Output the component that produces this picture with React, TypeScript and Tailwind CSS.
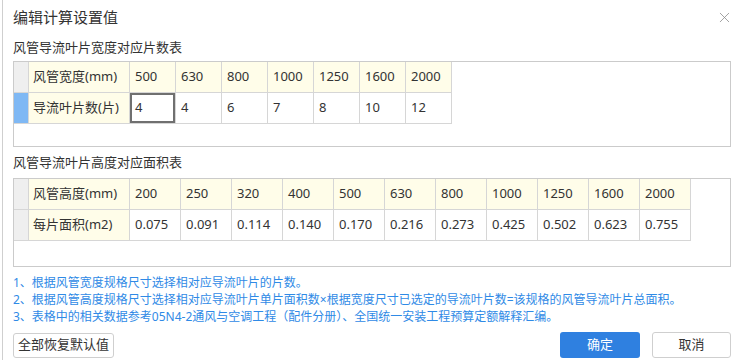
import { X } from 'lucide-react';

const font = { fontFamily: '"Noto Sans", "Noto Sans CJK SC", sans-serif' };

interface GridRow {
  label: string;
  values: string[];
  header?: boolean;
  active?: boolean;
}

interface GridProps {
  rows: GridRow[];
  colWidth: string;
  rowHeight: string;
  boxHeight: string;
  selected?: number;
}

const Grid = ({ rows, colWidth, rowHeight, boxHeight, selected }: GridProps) => {
  return (
    <div className={`border border-[#cbcbcb] bg-white ${boxHeight}`}>
      {rows.map((row, r) => (
        <div key={r} className={`flex ${rowHeight}`}>
          <div
            className={`w-[15px] shrink-0 border-r border-b border-[#d6d6d6] ${
              row.active ? 'bg-[#7fb8f4]' : 'bg-[#efefef]'
            }`}
          />
          <div className="flex w-[101px] shrink-0 items-center border-r border-b border-[#d6d6d6] bg-[#fffde9] pl-[4px] text-[13px] text-[#333]">
            {row.label}
          </div>
          {row.values.map((v, i) => (
            <div
              key={i}
              className={`flex shrink-0 items-center border-r border-b border-[#d6d6d6] pl-[5px] text-[13px] text-[#333] ${colWidth} ${
                row.header ? 'bg-[#fffde9]' : 'bg-white'
              } ${!row.header && selected === i ? 'shadow-[inset_0_0_0_2px_#707070]' : ''}`}
            >
              {v}
            </div>
          ))}
        </div>
      ))}
    </div>
  );
};

export default function App() {
  return (
    <div className="h-[360px] w-[734px] bg-white pl-[2px]" style={font}>
      <div className="flex h-full flex-col border-l border-[#cfcfcf] pl-[10px] pr-[3px]">
        <div className="flex h-[34px] shrink-0 items-center justify-between">
          <span className="text-[15px] text-[#333]">编辑计算设置值</span>
          <X className="-mr-[2px] mt-[1px] h-[17px] w-[17px] text-[#8a8a8a]" strokeWidth={1.1} />
        </div>
        <div className="flex h-[27px] items-center text-[13px] text-[#333]">风管导流叶片宽度对应片数表</div>
        <Grid
          colWidth="w-[46px]"
          rowHeight="h-[31px]"
          boxHeight="h-[86px]"
          selected={0}
          rows={[
            { label: '风管宽度(mm)', values: ['500', '630', '800', '1000', '1250', '1600', '2000'], header: true },
            { label: '导流叶片数(片)', values: ['4', '4', '6', '7', '8', '10', '12'], active: true },
          ]}
        />
        <div className="flex h-[31px] items-center pt-[1px] text-[13px] text-[#333]">风管导流叶片高度对应面积表</div>
        <Grid
          colWidth="w-[51px]"
          rowHeight="h-[31px]"
          boxHeight="h-[89px]"
          rows={[
            {
              label: '风管高度(mm)',
              values: ['200', '250', '320', '400', '500', '630', '800', '1000', '1250', '1600', '2000'],
              header: true,
            },
            {
              label: '每片面积(m2)',
              values: ['0.075', '0.091', '0.114', '0.140', '0.170', '0.216', '0.273', '0.425', '0.502', '0.623', '0.755'],
            },
          ]}
        />
        <div className="mt-[7px] flex flex-col text-[12px] leading-[17px] text-[#2f8ae6]">
          <span>1、根据风管宽度规格尺寸选择相对应导流叶片的片数。</span>
          <span>2、根据风管高度规格尺寸选择相对应导流叶片单片面积数×根据宽度尺寸已选定的导流叶片数=该规格的风管导流叶片总面积。</span>
          <span>3、表格中的相关数据参考05N4-2通风与空调工程（配件分册）、全国统一安装工程预算定额解释汇编。</span>
        </div>
        <div className="mt-[7px] flex items-center justify-between">
          <button className="h-[25px] w-[101px] rounded-[3px] border border-[#cfcfcf] bg-white text-[13px] text-[#333]">
            全部恢复默认值
          </button>
          <div className="flex gap-[12px]">
            <button className="h-[26px] w-[80px] rounded-[3px] bg-[#2f80e0] text-[13px] text-white">确定</button>
            <button className="h-[26px] w-[79px] rounded-[3px] border border-[#cfcfcf] bg-white text-[13px] text-[#333]">
              取消
            </button>
          </div>
        </div>
      </div>
    </div>
  );
}
